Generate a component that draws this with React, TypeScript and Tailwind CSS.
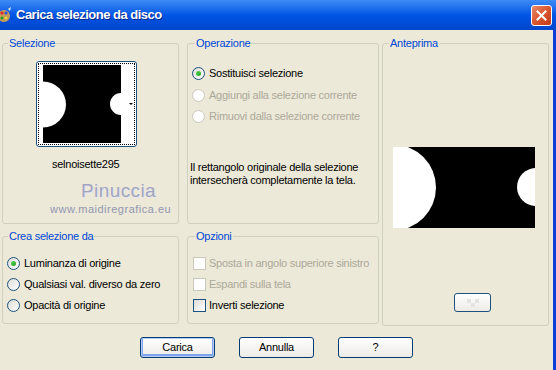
import type { ReactNode } from 'react';

function Group({
  label,
  indent = 'ml-[5px]',
  className,
  children,
}: {
  label: string;
  indent?: string;
  className: string;
  children?: ReactNode;
}) {
  return (
    <fieldset className={`rounded-[3px] border border-[#D0D0BF] ${className}`}>
      <legend className={`${indent} px-[1px] leading-[13px] text-[#0046D5]`}>{label}</legend>
      {children}
    </fieldset>
  );
}

function Radio({ label, checked, disabled }: { label: string; checked?: boolean; disabled?: boolean }) {
  return (
    <div className="flex items-center gap-[4px]">
      <span
        className={`flex h-[13px] w-[13px] items-center justify-center rounded-full border ${
          disabled
            ? 'border-[#CAC8BB] bg-white'
            : 'border-[#1C5180] bg-gradient-to-br from-[#DCDCD6] to-white'
        }`}
      >
        {checked && (
          <span className="h-[5px] w-[5px] rounded-full bg-gradient-to-br from-[#55D655] to-[#21A121]" />
        )}
      </span>
      <span className={disabled ? 'text-[#ACA899]' : 'text-black'}>{label}</span>
    </div>
  );
}

function Check({ label, disabled }: { label: string; disabled?: boolean }) {
  return (
    <div className="flex items-center gap-[3px]">
      <span
        className={`h-[13px] w-[13px] border ${
          disabled
            ? 'border-[#CAC8BB] bg-white'
            : 'border-[#1C5180] bg-gradient-to-br from-[#DCDCD7] to-white'
        }`}
      />
      <span className={disabled ? 'text-[#ACA899]' : 'text-black'}>{label}</span>
    </div>
  );
}

function XpButton({ label, isDefault }: { label: string; isDefault?: boolean }) {
  return (
    <button
      className={`h-[21px] w-[75px] rounded-[3px] border border-[#003C74] bg-gradient-to-b from-white to-[#ECEBE6] text-black ${
        isDefault ? 'shadow-[inset_0_0_0_1px_#B6CCF5,inset_0_-1px_0_2px_#7FA4EC]' : ''
      }`}
    >
      {label}
    </button>
  );
}

export default function App() {
  return (
    <div className="flex h-[370px] w-[556px] flex-col overflow-hidden bg-[#ECE9D8] font-['Liberation_Sans',Arial,sans-serif] text-[11px] tracking-[-0.25px]">
      {/* title bar */}
      <div className="flex h-[30px] items-center bg-gradient-to-b from-[#3D8BF5] via-[#0055E5] to-[#0046CC] pr-[4px]">
        <svg width="14" height="16" viewBox="0 0 14 16" className="-ml-[2px]">
          <ellipse cx="6" cy="9" rx="6" ry="6" fill="#C89A5A" />
          <circle cx="4" cy="6" r="1.5" fill="#E02020" />
          <circle cx="8" cy="6" r="1.5" fill="#2050E0" />
          <circle cx="4" cy="11" r="1.5" fill="#20A020" />
          <circle cx="8" cy="11" r="1.3" fill="#F0E030" />
          <path d="M10 2 L13 0 L12 4 Z" fill="#E8E8E8" />
        </svg>
        <span className="ml-[4px] text-[13px] font-bold tracking-[-0.5px] text-white [text-shadow:1px_1px_0_#0A2A8A]">
          Carica selezione da disco
        </span>
        <div className="ml-auto flex h-[21px] w-[21px] items-center justify-center rounded-[3px] border border-white bg-gradient-to-br from-[#E98A6A] via-[#D9562E] to-[#C0391A]">
          <svg width="11" height="11" viewBox="0 0 11 11">
            <path d="M1.5 1.5 L9.5 9.5 M9.5 1.5 L1.5 9.5" stroke="white" strokeWidth="2" strokeLinecap="square" />
          </svg>
        </div>
      </div>

      {/* body */}
      <div className="flex flex-1 flex-col border-r-[3px] border-[#0B3FD8] pl-[2px] pt-[7px]">
        <div className="flex">
          <div className="flex w-[377px] flex-col gap-[6px]">
            <div className="flex gap-[8px]">
              <Group label="Selezione" className="h-[187px] w-[177px]">
                <div className="ml-[33px] mt-[11px] flex h-[86px] w-[101px] rounded-[3px] border border-[#1C5180] bg-white p-[1px]">
                  <div className="flex-1 border border-dotted border-black">
                    <svg width="95" height="80" viewBox="0 0 95 80">
                      <rect x="4" y="1" width="78" height="78" fill="black" />
                      <circle cx="4" cy="40.5" r="23" fill="white" />
                      <circle cx="82" cy="40" r="11" fill="white" />
                      <path d="M90 39 L94 39 L92 41 Z" fill="black" />
                    </svg>
                  </div>
                </div>
                <p className="ml-[49px] mt-[9px] text-black">selnoisette295</p>
                <p className="ml-[78px] mt-[7px] text-[19px] leading-[22px] tracking-[0.4px] text-[#A2A5C0] [text-shadow:1px_1px_0_#E6E6F0]">
                  Pinuccia
                </p>
                <p className="ml-[47px] mt-[1px] text-[11px] leading-[12px] tracking-[0.5px] text-[#9297B0]">
                  www.maidiregrafica.eu
                </p>
              </Group>
              <Group label="Operazione" indent="ml-[7px]" className="h-[187px] w-[192px]">
                <div className="mt-[12px] flex flex-col pl-[4px]">
                  <div className="flex h-[23px] items-center">
                    <Radio label="Sostituisci selezione" checked />
                  </div>
                  <div className="flex h-[21px] items-center">
                    <Radio label="Aggiungi alla selezione corrente" disabled />
                  </div>
                  <div className="flex h-[21px] items-center">
                    <Radio label="Rimuovi dalla selezione corrente" disabled />
                  </div>
                </div>
                <p className="mt-[34px] pl-[2px] leading-[13px] text-black">
                  Il rettangolo originale della selezione
                  <br />
                  intersecherà completamente la tela.
                </p>
              </Group>
            </div>
            <div className="flex gap-[8px]">
              <Group label="Crea selezione da" className="h-[94px] w-[177px]">
                <div className="mt-[10px] flex flex-col pl-[4px]">
                  <div className="flex h-[21px] items-center">
                    <Radio label="Luminanza di origine" checked />
                  </div>
                  <div className="flex h-[21px] items-center">
                    <Radio label="Qualsiasi val. diverso da zero" />
                  </div>
                  <div className="flex h-[20px] items-center">
                    <Radio label="Opacità di origine" />
                  </div>
                </div>
              </Group>
              <Group label="Opzioni" indent="ml-[7px]" className="h-[94px] w-[192px]">
                <div className="mt-[10px] flex flex-col pl-[5px]">
                  <div className="flex h-[21px] items-center">
                    <Check label="Sposta in angolo superiore sinistro" disabled />
                  </div>
                  <div className="flex h-[21px] items-center">
                    <Check label="Espandi sulla tela" disabled />
                  </div>
                  <div className="flex h-[20px] items-center">
                    <Check label="Inverti selezione" />
                  </div>
                </div>
              </Group>
            </div>
          </div>
          <Group label="Anteprima" indent="ml-[6px]" className="ml-[3px] h-[289px] w-[167px]">
            <svg width="142" height="81" viewBox="0 0 142 81" className="ml-[10px] mt-[97px] block">
              <rect width="142" height="81" fill="black" />
              <circle cx="0" cy="40.5" r="43" fill="white" />
              <circle cx="143" cy="40" r="19" fill="white" />
            </svg>
            <div className="ml-[71px] mt-[65px] flex h-[19px] w-[37px] items-center justify-center rounded-[3px] border border-[#1C5180] bg-gradient-to-b from-white to-[#ECEBE6]">
              <div className="grid grid-cols-3">
                <span className="h-[4px] w-[4px] bg-[#E4E4E4]" />
                <span className="h-[4px] w-[4px]" />
                <span className="h-[4px] w-[4px] bg-[#E4E4E4]" />
                <span className="h-[4px] w-[4px]" />
                <span className="h-[4px] w-[4px] bg-[#E4E4E4]" />
                <span className="h-[4px] w-[4px]" />
              </div>
            </div>
          </Group>
        </div>
        <div className="mt-[11px] flex justify-center gap-[24px] pr-[2px]">
          <XpButton label="Carica" isDefault />
          <XpButton label="Annulla" />
          <XpButton label="?" />
        </div>
      </div>
    </div>
  );
}
